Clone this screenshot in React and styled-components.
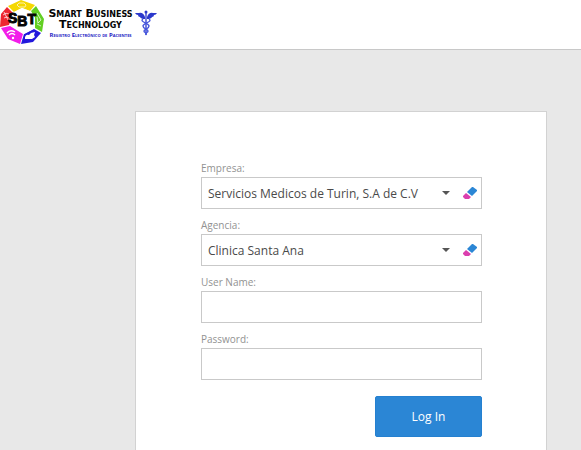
import React, { useState } from "react";
import styled, { createGlobalStyle } from "styled-components";

const GlobalStyle = createGlobalStyle`
  *, *::before, *::after { box-sizing: border-box; }
  body {
    margin: 0;
    background: #e8e8e8;
    font-family: "Open Sans", "Noto Sans", sans-serif;
    color: #4a4a4a;
  }
`;

const Page = styled.div`
  display: flex;
  flex-direction: column;
  min-height: 100vh;
`;

const Header = styled.header`
  display: flex;
  align-items: flex-start;
  height: 50px;
  background: #fff;
  border-bottom: 1px solid #c8c8c8;
`;

const Emblem = styled.svg`
  flex: none;
  width: 44px;
  height: 44px;
`;

const EmblemText = styled.text`
  font-family: "Liberation Sans Narrow", "Liberation Sans", sans-serif;
  font-size: 14px;
  font-weight: 700;
`;

const Brand = styled.div`
  display: flex;
  flex-direction: column;
  align-items: center;
  min-width: 87px;
  padding-top: 8px;
  margin-left: 3px;
  margin-right: 1px;
  white-space: nowrap;
`;

const BrandName = styled.span`
  color: #050505;
  font-family: "DejaVu Sans", sans-serif;
  font-size: 11px;
  font-weight: 700;
  font-variant: small-caps;
  line-height: 11px;
  text-align: center;
`;

const Tagline = styled.span`
  margin-top: 1px;
  color: #2523c4;
  font-family: "Open Sans", sans-serif;
  font-size: 6px;
  font-weight: 700;
  font-variant: small-caps;
  line-height: 8px;
`;

const Caduceus = styled.svg`
  flex: none;
  width: 22px;
  height: 26px;
  margin-top: 10px;
`;

const Main = styled.main`
  display: flex;
  flex: 1;
  padding: 61px 34px 0 135px;
`;

const LoginForm = styled.form`
  display: flex;
  flex: 1;
  flex-direction: column;
  gap: 9px;
  min-width: 0;
  padding: 49px 64px 12px 65px;
  background: #fff;
  border: 1px solid #d2d2d2;
  border-bottom: 0;
`;

const Field = styled.div`
  display: flex;
  flex-direction: column;
`;

const Label = styled.label`
  color: #929292;
  font-size: 10px;
  line-height: 14px;
  padding-bottom: 2px;
`;

const Combo = styled.div`
  display: flex;
  align-items: center;
  height: 32px;
  background: #fff;
  border: 1px solid #c9c9c9;
`;

const Select = styled.select`
  flex: 1;
  min-width: 0;
  height: 100%;
  margin-right: -20px;
  padding: 0 20px 0 6px;
  appearance: none;
  background: transparent;
  border: 0;
  color: inherit;
  font-family: inherit;
  font-size: 12px;
`;

const Caret = styled.svg`
  flex: none;
  width: 8px;
  height: 4px;
  pointer-events: none;
`;

const ClearButton = styled.button`
  display: flex;
  align-items: center;
  justify-content: center;
  width: 22px;
  height: 100%;
  margin-left: 9px;
  padding: 0;
  background: none;
  border: 0;
`;

const Input = styled.input`
  width: 100%;
  height: 32px;
  padding: 0 6px;
  background: #fff;
  border: 1px solid #c9c9c9;
  border-radius: 0;
  color: inherit;
  font-family: inherit;
  font-size: 12px;
`;

const SubmitButton = styled.button`
  align-self: flex-end;
  width: 107px;
  height: 41px;
  margin-top: 7px;
  background: #2b86d5;
  border: 1px solid #2580d0;
  border-radius: 2px;
  color: #fff;
  font-family: inherit;
  font-size: 12px;
`;

function SbtEmblem() {
  return (
    <Emblem viewBox="0 0 44 44" aria-hidden="true">
      <path d="M8 6 21 0 35 5 30 11 22 8 14 12Z" fill="#f5d800" />
      <path d="M36 6 44 19 42 32 35 28 35 18 31 11Z" fill="#62cf22" />
      <path d="M41 33 33 42 21 44 24 34 34 29Z" fill="#2218dc" />
      <path d="M20 44 8 39 1 28 10 26 23 34Z" fill="#f21de9" />
      <path d="M0 27 1 14 7 7 13 13 9 25Z" fill="#ed2632" />
      <path d="m14 12 8-4 8 3 5 7v10l-11 6-13-8-2-6Z" fill="#fff" />
      <g fill="none" stroke="#fff" strokeWidth="1">
        <path d="m17 5 2-2 5 0 2 2-1 2h-6Z" strokeOpacity=".65" />
        <path d="M3 15q3-3 6-1M4 18q3-2 5 0M4 12l4 8" strokeOpacity=".7" />
        <path d="m37 13 4 7-3 3-1-6M37 24l4 2" strokeOpacity=".7" />
        <path d="M7 33q3-4 8-1M9 35q3-3 6 0" strokeWidth="1.4" />
      </g>
      <circle cx="13" cy="38" r="1.2" fill="#fff" />
      <path d="M25 37q1-3 4-2l2-2 4-1-1 3 1 2-3 2h-7Z" fill="#fff" />
      <EmblemText x="8" y="23 26 24" fill="#050505" stroke="#050505" strokeWidth="1">
        SBT
      </EmblemText>
    </Emblem>
  );
}

function CaduceusMark() {
  return (
    <Caduceus viewBox="0 0 22 26" aria-hidden="true">
      <circle cx="11" cy="2" r="1.5" fill="#2b38cc" />
      <path
        d="M10 7Q8 2 4 3L0 3q1 2 3 2 0 2 2 2 1 2 5 2ZM12 7q2-5 6-4l4 0q-1 2-3 2 0 2-2 2-1 2-5 2Z"
        fill="#2b38cc"
      />
      <path d="M11 3v22" stroke="#2b38cc" strokeWidth="1.3" />
      <path
        d="M8 9c-4 3 6 4 6 7s-5 3-5 5 3 1 2 4M14 9c4 3-6 4-6 7s5 3 5 5-3 1-2 4"
        fill="none"
        stroke="#4656dc"
        strokeWidth="1.4"
      />
    </Caduceus>
  );
}

function EraserIcon() {
  return (
    <svg width="14" height="12" viewBox="0 0 14 12" aria-hidden="true">
      <path d="M9 0h1l4 3v1L9 9 4 5Z" fill="#2b86d5" />
      <path d="m3 6 5 4-2 2H2L0 10V9Z" fill="#db3fae" />
    </svg>
  );
}

function ComboField({ id, label, initial }) {
  const [value, setValue] = useState(initial);
  return (
    <Field>
      <Label htmlFor={id}>{label}:</Label>
      <Combo>
        <Select id={id} value={value} onChange={(e) => setValue(e.target.value)}>
          <option value="" />
          <option value={initial}>{initial}</option>
        </Select>
        <Caret viewBox="0 0 8 4" aria-hidden="true">
          <path d="M0 0h8L4 4Z" fill="#555" />
        </Caret>
        <ClearButton type="button" aria-label={`Clear ${label}`} onClick={() => setValue("")}>
          <EraserIcon />
        </ClearButton>
      </Combo>
    </Field>
  );
}

function TextField({ id, label, type }) {
  return (
    <Field>
      <Label htmlFor={id}>{label}:</Label>
      <Input id={id} type={type} />
    </Field>
  );
}

export default function App() {
  return (
    <Page>
      <GlobalStyle />
      <Header>
        <SbtEmblem />
        <Brand>
          <BrandName>Smart Business</BrandName>
          <BrandName>Technology</BrandName>
          <Tagline>Registro Electrónico de Pacientes</Tagline>
        </Brand>
        <CaduceusMark />
      </Header>
      <Main>
        <LoginForm onSubmit={(e) => e.preventDefault()}>
          <ComboField id="empresa" label="Empresa" initial="Servicios Medicos de Turin, S.A de C.V" />
          <ComboField id="agencia" label="Agencia" initial="Clinica Santa Ana" />
          <TextField id="user" label="User Name" type="text" />
          <TextField id="password" label="Password" type="password" />
          <SubmitButton type="submit">Log In</SubmitButton>
        </LoginForm>
      </Main>
    </Page>
  );
}
